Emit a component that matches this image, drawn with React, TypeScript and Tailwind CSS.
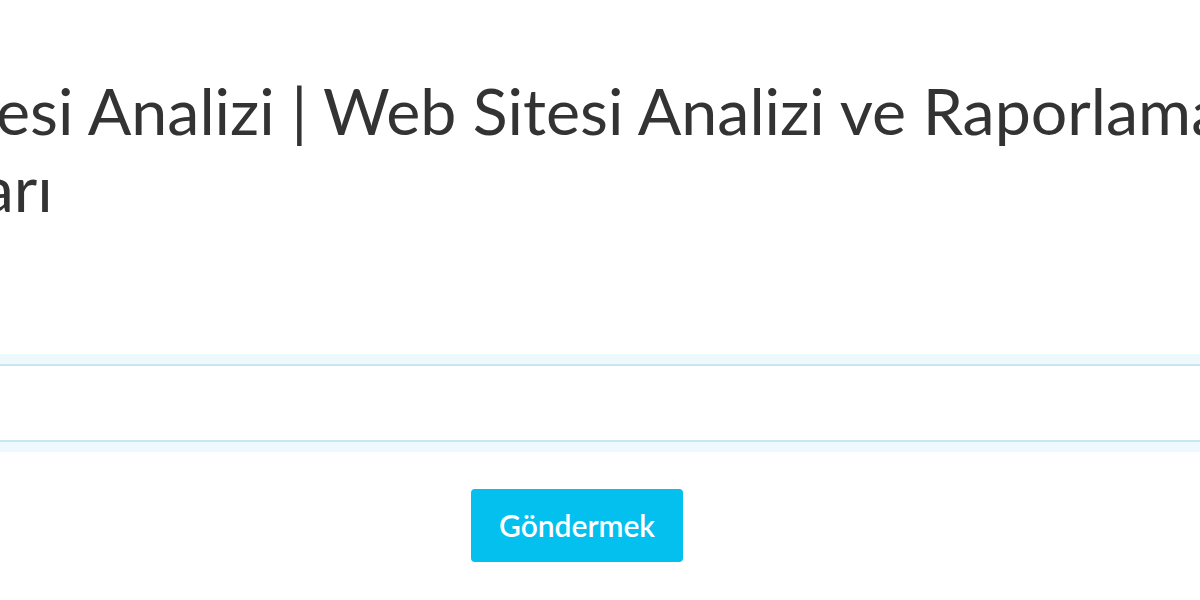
import React from 'react';

export default function App() {
  return (
    <div className="w-[1200px] h-[600px] overflow-hidden bg-white" style={{ fontFamily: 'Lato, "Noto Sans", sans-serif' }}>
      <div className="w-[1500px] ml-[-227px] flex flex-col">
        <h1 className="pt-[72px] text-[64.5px] leading-[77px] font-normal text-[#333333]">
          Web Sitesi Analizi | Web Sitesi Analizi ve Raporlama Yazılımları
        </h1>

        <form className="mt-[138px] flex flex-col items-center pl-[108px]">
          <input
            type="text"
            className="w-full h-[78px] border-y-2 border-[#c8e6f4] bg-white outline-none shadow-[0_0_0_10px_#eef9fd]"
          />
          <button
            type="button"
            className="mt-[47px] w-[212px] h-[73px] rounded-[4px] bg-[#03c0ef] text-white text-[30px] font-semibold"
          >
            Göndermek
          </button>
        </form>
      </div>
    </div>
  );
}
